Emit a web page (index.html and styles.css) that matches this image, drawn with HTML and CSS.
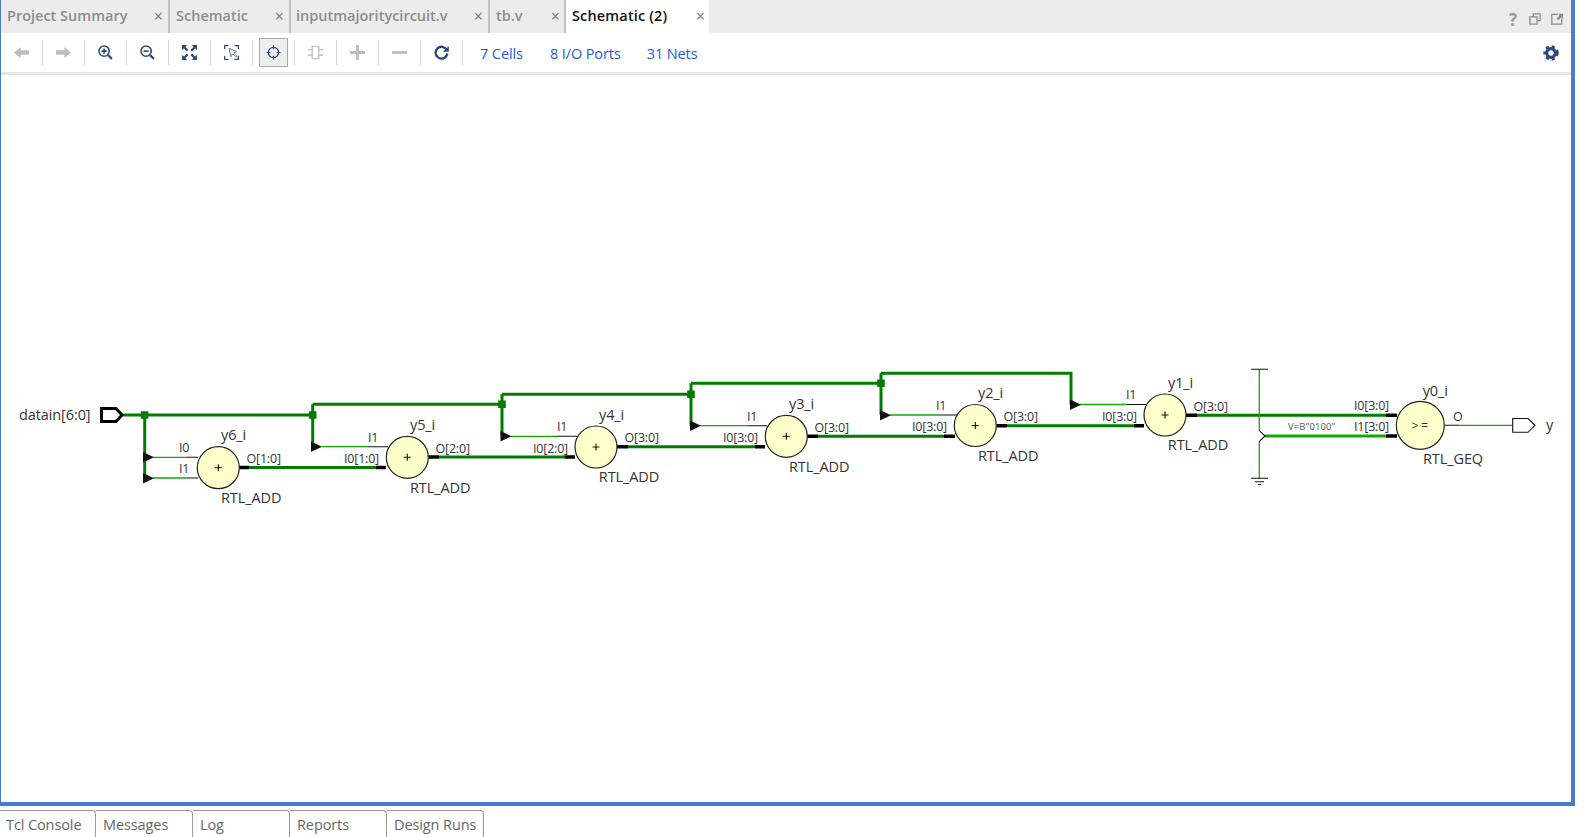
FILE: index.html
```html
<!DOCTYPE html>
<html lang="en">
<head>
<meta charset="utf-8">
<title>Schematic (2)</title>
<link rel="stylesheet" href="styles.css">
</head>
<body>
<main class="frame">
  <nav class="tabbar">
    <div class="tab t1"><span class="tab-name">Project Summary</span><span class="tab-x">×</span></div>
    <div class="tab t2"><span class="tab-name">Schematic</span><span class="tab-x">×</span></div>
    <div class="tab t3"><span class="tab-name">inputmajoritycircuit.v</span><span class="tab-x">×</span></div>
    <div class="tab t4"><span class="tab-name">tb.v</span><span class="tab-x">×</span></div>
    <div class="tab t5 active"><span class="tab-name">Schematic (2)</span><span class="tab-x">×</span></div>
    <div class="win-icons">
      <span class="help">?</span>
      <svg class="win-icon" viewBox="0 0 14 14"><path class="win-line" d="M5 4V1h8v8h-3M1 4.500h8.500v8.500H1z"/></svg>
      <svg class="win-icon" viewBox="0 0 14 14"><path class="win-line" d="M8 1.500H1V13h11.500V6.500"/><path class="win-fill" d="M8 1h6v6l-2-2-3.500 3.500-2-2L10 3z"/></svg>
    </div>
  </nav>

  <div class="toolbar">
    <div class="tool"><svg class="ic" viewBox="0 0 16 16"><path class="fill-off" d="M0 8l7-6v3.500h9v5H7V14z"/></svg></div>
    <div class="tool"><svg class="ic" viewBox="0 0 16 16"><path class="fill-off" d="M16 8L9 2v3.500H0v5h9V14z"/></svg></div>
    <div class="tool"><svg class="ic" viewBox="0 0 16 16"><circle class="ln" cx="6.500" cy="6.500" r="5.500"/><path class="ln" d="M3.700 6.500h5.600M6.500 3.700v5.600"/><path class="ln-b" d="M10.800 10.800l4 4"/></svg></div>
    <div class="tool"><svg class="ic" viewBox="0 0 16 16"><circle class="ln" cx="6.500" cy="6.500" r="5.500"/><path class="ln" d="M3.700 6.500h5.600"/><path class="ln-b" d="M10.800 10.800l4 4"/></svg></div>
    <div class="tool"><svg class="ic" viewBox="0 0 16 16"><path class="fill-on" d="M0 0h5.500L0 5.500zM16 0v5.500L10.500 0zM0 16v-5.500L5.500 16zM16 16h-5.500l5.500-5.500z"/><path class="ln-b" d="M2.500 2.500L6 6M13.500 2.500L10 6M2.500 13.500L6 10M13.500 13.500L10 10"/></svg></div>
    <div class="tool"><svg class="ic" viewBox="0 0 16 16"><path class="ln-s" d="M.7 4.500V.7h4M11.300.7h4v3.800M.7 11.500v3.800h4M11 15.300h4.300v-3.800"/><path class="ln-t" d="M5.500 3.500l1.800 9 2-3 3.500 3.500 1-1-3.500-3.500 3-1.500z"/></svg></div>
    <div class="tool tool-on"><span class="tool-box"><svg class="ic" viewBox="0 0 16 16"><circle class="ln-s" cx="8" cy="8" r="5.500"/><path class="ln-s" d="M8 .5v4M8 11.500v4M.5 8h4M11.500 8h4"/></svg></span></div>
    <div class="tool"><svg class="ic" viewBox="0 0 16 16"><path class="ln-off" d="M4.500 1.500h7v13h-7zM0 5h4.500M0 11h4.500M11.500 5H16M11.500 11H16"/></svg></div>
    <div class="tool"><svg class="ic" viewBox="0 0 16 16"><path class="fill-off" d="M6.500 0h3v6.500H16v3H9.500V16h-3V9.500H0v-3h6.500z"/></svg></div>
    <div class="tool"><svg class="ic" viewBox="0 0 16 16"><path class="fill-off" d="M0 6.500h16v3H0z"/></svg></div>
    <div class="tool"><svg class="ic" viewBox="0 0 16 16"><path class="ln-r" d="M13.600 5.200A6.300 6.300 0 1 0 14.300 9"/><path class="fill-on" d="M15.800 1v6.300H9.500z"/></svg></div>
    <a class="count c1">7 Cells</a>
    <a class="count c2">8 I/O Ports</a>
    <a class="count c3">31 Nets</a>
    <svg class="gear" viewBox="0 0 16 16"><circle class="gear-ring" cx="8" cy="8" r="4.300"/><circle class="gear-teeth" cx="8" cy="8" r="6.300"/></svg>
  </div>
  <div class="rule"></div>

  <svg class="canvas" viewBox="1 75 1570 727">
    <!-- thick data buses -->
    <path class="bus" d="M123 415H312.700V446.700M312.700 404.300H502V436.700M502 394.300H691V425.700M691 383.300H881V415M881 373.300H1071V404.500"/>
    <path class="bus" d="M312.700 415V404.300M502 404.300V394.300M691 394.300V383.300M881 383.300V373.300"/>
    <path class="bus" d="M144.700 415V478"/>
    <path class="bus" d="M249 467.500H376M439 457H565M628 446.800H755M818 436.300H944M1007 425.700H1134M1197 415.200H1386"/>
    <path class="bus-lt" d="M1265 436H1386"/>
    <!-- thick black stubs -->
    <path class="stub" d="M239 467.500H249M376 467.500H386M428 457H439M565 457H575M617 446.800H628M755 446.800H765M807 436.300H818M944 436.300H955M996 425.700H1007M1134 425.700H1144M1186 415.200H1197M1386 415.200H1397M1386 436H1397"/>
    <!-- thin nets -->
    <path class="net" d="M153 457.300H187M153 478H187M322 446.700H368M511 436.300H557M700 425.700H748M890 415H937M1080 404.500H1127M1459 425.300H1513"/>
    <path class="net" d="M1259.300 369.300V430.700M1259.300 441.500V478.300"/>
    <path class="thin" d="M1259.300 430.700L1265 436L1259.300 441.500"/>
    <path class="thin" d="M187 457.300H198M187 478H198M368 446.700H388M557 436.300H577M748 425.700H767M937 415H957M1127 404.500H1146M1444 425.300H1459"/>
    <path class="thin" d="M1251 369.300H1268M1251 478.300H1268M1255 481.700H1264M1258 484.500H1261"/>
    <!-- junctions and ripper triangles -->
    <path class="dot" d="M140.800 411.200h7.600v7.600h-7.600zM308.900 411.200h7.600v7.600h-7.600zM498.200 400.500h7.600v7.600h-7.600zM687.200 390.500h7.600v7.600h-7.600zM877.200 379.500h7.600v7.600h-7.600z"/>
    <path class="tri" d="M143 452l11 5.300-11 5.300zM143 473l11 5.300-11 5.300zM311 441.500l11 5.300-11 5.300zM500.500 431l11 5.300-11 5.300zM690 420.500l11 5.300-11 5.300zM880 410l11 5.300-11 5.300zM1070 399.500l11 5.300-11 5.300z"/>
    <!-- ports -->
    <path class="port-in" d="M101.500 408.500H116L122 415L116 421.500H101.500z"/>
    <path class="port-out" d="M1512.700 418.500H1528L1535 425.300L1528 432.300H1512.700z"/>
    <!-- cells -->
    <circle class="cell" cx="218.300" cy="467.700" r="21"/>
    <circle class="cell" cx="407.300" cy="457.300" r="21"/>
    <circle class="cell" cx="596" cy="447" r="21"/>
    <circle class="cell" cx="786.300" cy="436.300" r="21"/>
    <circle class="cell" cx="975.300" cy="425.500" r="21"/>
    <circle class="cell" cx="1165" cy="415" r="21"/>
    <circle class="cell" cx="1420.300" cy="425.300" r="24"/>
    <path class="thin" d="M214.800 467.700h7M218.300 464.200v7M403.800 457.300h7M407.300 453.800v7M592.500 447h7M596 443.500v7M782.800 436.300h7M786.300 432.800v7M971.800 425.500h7M975.300 422v7M1161.500 415h7M1165 411.500v7"/>
    <text class="sym" x="1411.500" y="430">&gt; =</text>
    <!-- labels -->
    <text class="name" x="19" y="420">datain[6:0]</text>
    <text class="pin" x="179" y="451.500">I0</text>
    <text class="pin" x="179" y="472.500">I1</text>
    <text class="name" x="221" y="440">y6_i</text>
    <text class="pin" x="246.500" y="463">O[1:0]</text>
    <text class="name" x="221" y="503">RTL_ADD</text>
    <text class="pin" x="368" y="441.500">I1</text>
    <text class="pin" x="344" y="463">I0[1:0]</text>
    <text class="name" x="410" y="430">y5_i</text>
    <text class="pin" x="435.500" y="452.500">O[2:0]</text>
    <text class="name" x="410" y="492.700">RTL_ADD</text>
    <text class="pin" x="557" y="431">I1</text>
    <text class="pin" x="533" y="452.500">I0[2:0]</text>
    <text class="name" x="599" y="419.500">y4_i</text>
    <text class="pin" x="624.500" y="442">O[3:0]</text>
    <text class="name" x="598.800" y="482.400">RTL_ADD</text>
    <text class="pin" x="747" y="420.500">I1</text>
    <text class="pin" x="723" y="442">I0[3:0]</text>
    <text class="name" x="789" y="409.300">y3_i</text>
    <text class="pin" x="814.500" y="431.500">O[3:0]</text>
    <text class="name" x="789" y="471.700">RTL_ADD</text>
    <text class="pin" x="936" y="410">I1</text>
    <text class="pin" x="912" y="431">I0[3:0]</text>
    <text class="name" x="978" y="398">y2_i</text>
    <text class="pin" x="1003.500" y="421">O[3:0]</text>
    <text class="name" x="978" y="461">RTL_ADD</text>
    <text class="pin" x="1126" y="399.400">I1</text>
    <text class="pin" x="1102" y="421">I0[3:0]</text>
    <text class="name" x="1168" y="388">y1_i</text>
    <text class="pin" x="1193.500" y="410.500">O[3:0]</text>
    <text class="name" x="1167.800" y="450.400">RTL_ADD</text>
    <text class="const" x="1288" y="430">V=B"0100"</text>
    <text class="pin" x="1354" y="410">I0[3:0]</text>
    <text class="pin" x="1354" y="431">I1[3:0]</text>
    <text class="name" x="1422.700" y="395.500">y0_i</text>
    <text class="pin" x="1453" y="421">O</text>
    <text class="name" x="1423" y="464">RTL_GEQ</text>
    <text class="name" x="1546" y="430">y</text>
  </svg>
</main>

<footer class="bottom-tabs">
  <div class="btab">Tcl Console</div>
  <div class="btab">Messages</div>
  <div class="btab">Log</div>
  <div class="btab">Reports</div>
  <div class="btab">Design Runs</div>
</footer>
</body>
</html>
```

FILE: styles.css
```css
* { box-sizing: border-box; }

html, body { margin: 0; height: 100%; overflow: hidden; background: #fff; }

body {
  width: 1586px;
  height: 837px;
  font-family: "Open Sans", "Noto Sans", sans-serif;
}

.frame {
  width: 1575px;
  height: 806px;
  border-left: 1px solid #4a7ccc;
  border-right: 4px solid #4a7ccc;
  border-bottom: 4px solid #4a7ccc;
  display: flex;
  flex-direction: column;
}

/* top tab bar */
.tabbar {
  height: 33px;
  flex: none;
  display: flex;
  background: #ececec;
}

.tab {
  display: flex;
  align-items: center;
  justify-content: space-between;
  height: 33px;
  padding: 0 5px 2px 6px;
  border-right: 2px solid #c4c4c4;
  font-size: 14.500px;
  font-weight: 600;
  color: #8c8c8c;
  white-space: nowrap;
}

.t1 { width: 169px; }
.t2 { width: 121px; }
.t3 { width: 199px; padding-left: 5px; }
.t4 { width: 76px; padding-right: 4px; }
.t5 { width: 143px; }

.tab.active {
  background: #fff;
  border-right: 0;
  color: #111;
  padding-right: 4px;
  letter-spacing: 0.150px;
}

.tab-x {
  font-size: 16px;
  font-weight: 400;
  color: #777;
}

.win-icons {
  margin-left: auto;
  display: flex;
  align-items: center;
  gap: 10px;
  padding: 5px 8px 0 0;
  height: 33px;
}

.help {
  font-size: 17px;
  font-weight: 700;
  color: #999;
  width: 12px;
  text-align: center;
}

.win-icon { width: 12px; height: 12px; }
.win-line { fill: none; stroke: #8a8a8a; stroke-width: 1.500; }
.win-fill { fill: #8a8a8a; }

/* toolbar */
.toolbar {
  height: 39px;
  flex: none;
  display: flex;
  align-items: center;
  background: #fff;
}

.tool {
  width: 42px;
  height: 25px;
  flex: none;
  display: flex;
  align-items: center;
  justify-content: center;
  border-right: 1px solid #d4d4d4;
}

.tool-box {
  width: 29px;
  height: 29px;
  display: flex;
  align-items: center;
  justify-content: center;
  background: #eee;
  border: 1px solid #aaa;
}

.ic { width: 15px; height: 15px; display: block; }

.fill-off { fill: #bdbdbd; }
.fill-on { fill: #2c4a80; }
.ln { fill: none; stroke: #2c4a80; stroke-width: 1.700; }
.ln-b { fill: none; stroke: #2c4a80; stroke-width: 2.300; }
.ln-s { fill: none; stroke: #2c4a80; stroke-width: 1.300; }
.ln-t { fill: none; stroke: #5a6f94; stroke-width: 1; }
.ln-r { fill: none; stroke: #2c4a80; stroke-width: 2.500; }
.ln-off { fill: none; stroke: #c4c4c4; stroke-width: 1.500; }

.count {
  padding-top: 2px;
  font-size: 14.500px;
  letter-spacing: -0.100px;
  color: #1d5ce0;
  white-space: nowrap;
}

.c1 { margin-left: 17px; }
.c2 { margin-left: 27px; }
.c3 { margin-left: 26px; }

.gear { width: 16px; height: 16px; margin-left: auto; margin-right: 12px; }
.gear-ring { fill: none; stroke: #2c4a80; stroke-width: 3.200; }
.gear-teeth { fill: none; stroke: #2c4a80; stroke-width: 2.800; stroke-dasharray: 3 2.940; }

.rule { height: 3px; flex: none; background: #e6e6e6; }

/* schematic */
.canvas { display: block; width: 1570px; height: 727px; flex: none; background: #fff; }

.bus { fill: none; stroke: #007d00; stroke-width: 3; }
.bus-lt { fill: none; stroke: #11ab00; stroke-width: 3; }
.stub { fill: none; stroke: #000; stroke-width: 3.400; }
.net { fill: none; stroke: #11ab00; stroke-width: 1.300; }
.thin { fill: none; stroke: #111; stroke-width: 1.100; }
.dot { fill: #007d00; }
.tri { fill: #111; }
.port-in { fill: #fff; stroke: #000; stroke-width: 3; }
.port-out { fill: #fff; stroke: #111; stroke-width: 1.100; }
.cell { fill: #ffffcc; stroke: #222; stroke-width: 1.200; }

.name, .pin, .const, .sym { font-family: "Open Sans", "Noto Sans", sans-serif; fill: #333; }
.name { font-size: 14.500px; letter-spacing: -0.100px; }
.pin { font-size: 12.500px; letter-spacing: -0.200px; }
.const { font-size: 9.500px; fill: #555; letter-spacing: 0.100px; }
.sym { font-size: 12.500px; letter-spacing: -0.500px; }

/* bottom tabs */
.bottom-tabs {
  height: 27px;
  margin-top: 4px;
  display: flex;
}

.btab {
  width: 97px;
  height: 27px;
  padding: 4px 0 0 7px;
  border: 1px solid #999;
  border-bottom: 0;
  border-left: 0;
  border-radius: 0 4px 0 0;
  font-size: 14.500px;
  letter-spacing: -0.100px;
  color: #666;
  white-space: nowrap;
}

.btab:first-child { width: 96px; padding-left: 6px; }
```
